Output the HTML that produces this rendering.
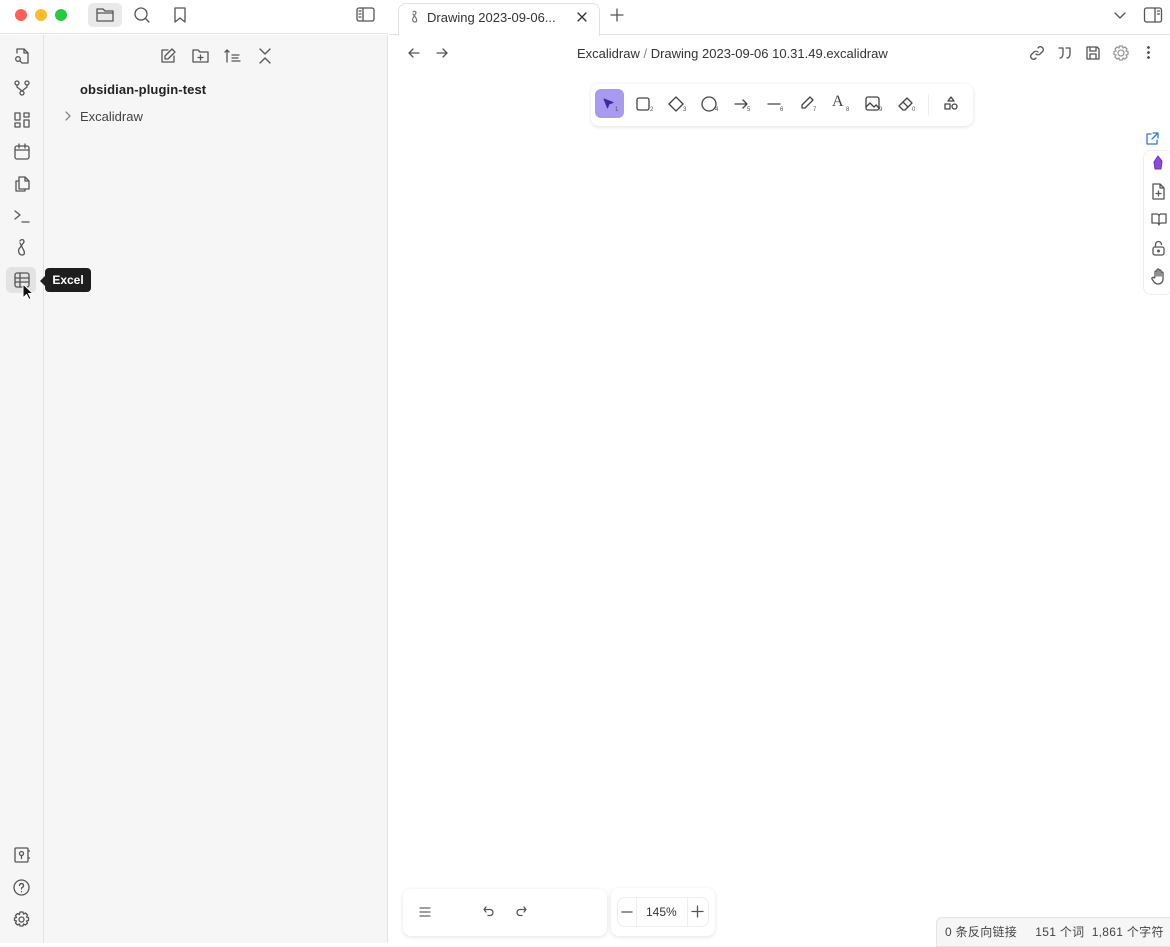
<!DOCTYPE html>
<html><head><meta charset="utf-8"><style>
*{box-sizing:border-box;margin:0;padding:0}
body{width:1170px;height:943px;overflow:hidden;background:#fff;font-family:"Liberation Sans","Noto Sans CJK SC",sans-serif;position:relative;color:#222}
.abs{position:absolute}
svg{position:absolute;fill:none;stroke:#555;stroke-width:1.3;stroke-linecap:round;stroke-linejoin:round}
.dot{position:absolute;width:12px;height:12px;border-radius:50%;top:9px}
.tb svg{stroke:#444}
.sub{position:absolute;font-size:6px;color:#555}
</style></head><body>
<div class="abs" style="left:0;top:0;width:388px;height:34px;background:#fff;border-bottom:1px solid #e3e3e3"></div>
<div class="dot" style="left:15px;background:#fe5f57"></div>
<div class="dot" style="left:35px;background:#febc2e"></div>
<div class="dot" style="left:55px;background:#28c840"></div>
<div class="abs" style="left:88px;top:3px;width:34px;height:24px;background:#e9e9e9;border-radius:5px"></div>
<svg style="left:95px;top:6px" width="20" height="18" viewBox="0 0 20 18"><path d="M2 3h6l2 2h8v10H2z M2 7h16"/></svg>
<svg style="left:133px;top:6px" width="18" height="18" viewBox="0 0 18 18"><circle cx="8" cy="8" r="6"/><path d="M12.5 12.5l3.5 3.5"/></svg>
<svg style="left:172px;top:6px" width="16" height="18" viewBox="0 0 16 18"><path d="M3 2h10v14l-5-4-5 4z"/></svg>
<svg style="left:356px;top:7px" width="20" height="16" viewBox="0 0 20 16"><rect x="1" y="1" width="17" height="13" rx="2"/><path d="M7 1v13M3 4h2M3 7h2M3 10h2"/></svg>
<div class="abs" style="left:0;top:35px;width:44px;height:908px;background:#f6f6f6;border-right:1px solid #e3e3e3"></div>
<div class="abs" style="left:44px;top:35px;width:344px;height:908px;background:#f6f6f6;border-right:1px solid #e3e3e3"></div>
<svg style="left:13px;top:47px" width="18" height="18" viewBox="0 0 18 18"><path d="M4 6V2h7l4 4v10H9"/><path d="M11 2v4h4"/><circle cx="5" cy="12" r="2.3"/><path d="M6.8 13.8L8.5 15.5"/></svg>
<svg style="left:13px;top:79px" width="18" height="18" viewBox="0 0 18 18"><circle cx="4" cy="4" r="2"/><circle cx="14" cy="4" r="2"/><circle cx="9" cy="14" r="2"/><path d="M4 6v2l5 4M14 6v2l-5 4"/></svg>
<svg style="left:13px;top:111px" width="18" height="18" viewBox="0 0 18 18"><rect x="2" y="2" width="5" height="7"/><rect x="11" y="2" width="5" height="4"/><rect x="2" y="12" width="5" height="4"/><rect x="11" y="9" width="5" height="7"/></svg>
<svg style="left:13px;top:143px" width="18" height="18" viewBox="0 0 18 18"><rect x="2" y="3" width="14" height="13" rx="2"/><path d="M2 7h14M6 1v4M12 1v4"/></svg>
<svg style="left:13px;top:175px" width="18" height="18" viewBox="0 0 18 18"><path d="M6 2h6l4 4v8H6z M12 2v4h4 M6 6H3v10h9v-2"/></svg>
<svg style="left:13px;top:207px" width="18" height="18" viewBox="0 0 18 18"><path d="M2 4l5 4-5 4M9 15h7"/></svg>
<svg style="left:15px;top:238px" width="14" height="20" viewBox="0 0 14 20"><path d="M5 3c1-2 4-2 4 1l-5 7c-1 2 0 6 3 6s3-3 1-6L5 5"/></svg>
<div class="abs" style="left:6px;top:267px;width:30px;height:26px;background:#e3e3e3;border-radius:5px"></div>
<svg style="left:13px;top:271px" width="18" height="18" viewBox="0 0 18 18"><rect x="2" y="2" width="14" height="14" rx="2"/><path d="M2 7h14M2 11h14M7 2v14"/></svg>
<svg style="left:22px;top:283px;fill:#111;stroke:#fff;stroke-width:1" width="12" height="18" viewBox="0 0 12 18"><path d="M1 1v14l3.5-3.5 2.5 5 2-1-2.5-5H11z"/></svg>
<div class="abs" style="left:45px;top:268px;width:46px;height:24px;background:#1e1e1e;border-radius:4px;color:#fff;font-size:12px;font-weight:bold;line-height:24px;text-align:center">Excel</div>
<div class="abs" style="left:40px;top:276px;width:0;height:0;border:5px solid transparent;border-right-color:#1e1e1e;border-left:0"></div>
<svg style="left:13px;top:846px" width="18" height="18" viewBox="0 0 18 18"><rect x="2" y="2" width="13" height="14" rx="1"/><circle cx="8.5" cy="7.5" r="2"/><path d="M8.5 9.5v3M15 5h1.5M15 12h1.5"/></svg>
<svg style="left:12px;top:878px" width="19" height="19" viewBox="0 0 19 19"><circle cx="9.5" cy="9.5" r="7.5"/><path d="M7.5 7.5a2 2 0 1 1 2.5 2c-.5.3-.5.8-.5 1.5M9.5 13.5v.2"/></svg>
<svg style="left:12px;top:910px" width="19" height="19" viewBox="0 0 19 19"><circle cx="9.5" cy="9.5" r="2.5"/><path d="M8 2h3l.5 2 2-1 2 2-1 2 2 .5v3l-2 .5 1 2-2 2-2-1-.5 2H8l-.5-2-2 1-2-2 1-2-2-.5V8l2-.5-1-2 2-2 2 1z"/></svg>
<svg style="left:159px;top:47px" width="18" height="18" viewBox="0 0 18 18"><path d="M15 9v6H3V3h6M13 2l3 3-7 7H6V9z"/></svg>
<svg style="left:191px;top:47px" width="19" height="18" viewBox="0 0 19 18"><path d="M2 3h5l2 2h8v10H2z M9.5 8v5M7 10.5h5"/></svg>
<svg style="left:223px;top:47px" width="19" height="18" viewBox="0 0 19 18"><path d="M4 15V3L2 5M4 3l2 2M9 8h7M9 11h6M9 14h8"/></svg>
<svg style="left:256px;top:47px" width="18" height="18" viewBox="0 0 18 18"><path d="M4 2l5 5 5-5M4 16l5-5 5 5"/></svg>
<div class="abs" style="left:80px;top:82px;font-size:13px;font-weight:bold;color:#222;letter-spacing:0.1px">obsidian-plugin-test</div>
<svg style="left:63px;top:111px;stroke:#888" width="10" height="10" viewBox="0 0 10 10"><path d="M3 1l4 4-4 4"/></svg>
<div class="abs" style="left:80px;top:109px;font-size:13px;color:#444">Excalidraw</div>
<div class="abs" style="left:389px;top:0;width:781px;height:35px;background:#fff;border-bottom:1px solid #e3e3e3"></div>
<div class="abs" style="left:398px;top:3px;width:202px;height:33px;background:#fff;border:1px solid #e0e0e0;border-bottom:none;border-radius:8px 8px 0 0"></div>
<svg style="left:409px;top:10px;stroke:#777;stroke-width:1.2" width="10" height="14" viewBox="0 0 10 14"><path d="M4 2c1-1 3-1 3 1l-3 5c-1 2 0 4 2 4s2-2 1-4L4 4"/></svg>
<div class="abs" style="left:427px;top:10px;font-size:13px;color:#333">Drawing 2023-09-06...</div>
<svg style="left:576px;top:11px;stroke:#333" width="12" height="12" viewBox="0 0 12 12"><path d="M2 2l8 8M10 2l-8 8"/></svg>
<svg style="left:610px;top:8px" width="14" height="14" viewBox="0 0 14 14"><path d="M7 1v12M1 7h12"/></svg>
<svg style="left:1113px;top:10px" width="14" height="12" viewBox="0 0 14 12"><path d="M2 3l5 5 5-5"/></svg>
<svg style="left:1143px;top:6px" width="20" height="18" viewBox="0 0 20 18"><rect x="1.5" y="2" width="17" height="14" rx="2"/><path d="M12 2v14M14.5 5h2M14.5 8h2"/></svg>
<svg style="left:407px;top:46px" width="14" height="14" viewBox="0 0 14 14"><path d="M12 7H2M6 3L2 7l4 4"/></svg>
<svg style="left:435px;top:46px" width="14" height="14" viewBox="0 0 14 14"><path d="M2 7h10M8 3l4 4-4 4"/></svg>
<div class="abs" style="left:577px;top:46px;font-size:13px;color:#333">Excalidraw <span style="color:#888">/</span> Drawing 2023-09-06 10.31.49.excalidraw</div>
<svg style="left:1029px;top:45px" width="16" height="16" viewBox="0 0 16 16"><path d="M7 9a3 3 0 0 0 4 0l3-3a3 3 0 0 0-4-4l-1 1M9 7a3 3 0 0 0-4 0l-3 3a3 3 0 0 0 4 4l1-1"/></svg>
<svg style="left:1057px;top:45px" width="16" height="16" viewBox="0 0 16 16"><path d="M2 3h4v5c0 3-1 5-3 5M9 3h4v5c0 3-1 5-3 5"/></svg>
<svg style="left:1085px;top:45px" width="16" height="16" viewBox="0 0 16 16"><path d="M2 2h10l2 2v10H2z M5 2v4h6V2M5 14v-5h6v5"/></svg>
<svg style="left:1112px;top:44px;stroke:#999" width="18" height="18" viewBox="0 0 18 18"><circle cx="9" cy="9" r="3"/><path d="M7.5 2h3l.5 2 2-1 2 2-1 2 2 .5v3l-2 .5 1 2-2 2-2-1-.5 2h-3l-.5-2-2 1-2-2 1-2-2-.5v-3l2-.5-1-2 2-2 2 1z"/></svg>
<div class="abs" style="left:1147px;top:45px;width:3px;height:14px;background:radial-gradient(circle,#555 1.3px,transparent 1.5px) 0 0/3px 5px"></div>
<div class="abs tb" style="left:591px;top:84px;width:382px;height:42px;background:#fff;border-radius:8px;box-shadow:0 1px 4px rgba(0,0,0,.12)">
<div class="abs" style="left:4px;top:5px;width:29px;height:29px;background:#a89af0;border-radius:6px"></div>
<svg style="left:11px;top:13px;fill:#3b2d9a;stroke:#3b2d9a;stroke-width:1" width="14" height="14" viewBox="0 0 14 14"><path d="M2 2l9 3.5-4 1.5-1.5 4z"/></svg><span class="sub" style="left:24px;top:23px">1</span>
<svg style="left:44px;top:12px" width="16" height="16" viewBox="0 0 16 16"><rect x="2" y="2" width="12" height="12" rx="2"/></svg><span class="sub" style="left:59px;top:23px">2</span>
<svg style="left:76px;top:11px" width="18" height="18" viewBox="0 0 18 18"><path d="M9 2l7 7-7 7-7-7z"/></svg><span class="sub" style="left:92px;top:23px">3</span>
<svg style="left:109px;top:11px" width="18" height="18" viewBox="0 0 18 18"><circle cx="9" cy="9" r="7"/></svg><span class="sub" style="left:124px;top:23px">4</span>
<svg style="left:142px;top:12px" width="16" height="16" viewBox="0 0 16 16"><path d="M2 8h12M10 4l4 4-4 4"/></svg><span class="sub" style="left:156px;top:23px">5</span>
<svg style="left:175px;top:12px" width="16" height="16" viewBox="0 0 16 16"><path d="M2 8h12"/></svg><span class="sub" style="left:189px;top:23px">6</span>
<svg style="left:208px;top:11px" width="16" height="16" viewBox="0 0 16 16"><path d="M11 2l3 3-8 8H3v-3z"/></svg><span class="sub" style="left:222px;top:23px">7</span>
<div class="abs" style="left:241px;top:9px;font-size:16px;color:#444;font-family:'Liberation Serif',serif">A</div><span class="sub" style="left:255px;top:23px">8</span>
<svg style="left:273px;top:11px" width="17" height="17" viewBox="0 0 17 17"><rect x="2" y="2" width="13" height="13" rx="2"/><path d="M2 12l4-4 4 4 2-2 3 3"/></svg><span class="sub" style="left:288px;top:23px">9</span>
<svg style="left:306px;top:11px" width="17" height="17" viewBox="0 0 17 17"><path d="M6 15l-4-4 8-8 5 5-7 7zM6 7l5 5"/></svg><span class="sub" style="left:321px;top:23px">0</span>
<div class="abs" style="left:337px;top:10px;width:1px;height:22px;background:#eee"></div>
<svg style="left:352px;top:11px" width="16" height="16" viewBox="0 0 16 16"><path d="M8 2l3 4H5z"/><rect x="2" y="9" width="5" height="5"/><circle cx="11.5" cy="11.5" r="2.5"/></svg>
</div>
<svg style="left:1145px;top:131px;stroke:#2e7bd6" width="15" height="15" viewBox="0 0 15 15"><path d="M12 9v4H2V3h4M8 2h5v5M13 2L7 8"/></svg>
<div class="abs" style="left:1143px;top:150px;width:30px;height:145px;border:1px solid #eee;border-radius:8px;background:#fff"></div>
<svg style="left:1152px;top:155px;fill:#8a4bd8;stroke:#6b36b8;stroke-width:1" width="12" height="16" viewBox="0 0 12 16"><path d="M6 1l4 5-1 8H3L2 7z"/></svg>
<svg style="left:1151px;top:183px" width="15" height="17" viewBox="0 0 15 17"><path d="M2 1h7l4 4v11H2z M9 1v4h4 M7.5 8v5M5 10.5h5"/></svg>
<svg style="left:1151px;top:212px" width="16" height="15" viewBox="0 0 16 15"><path d="M1 2h5c1 0 2 1 2 2v9c0-1-1-2-2-2H1zM15 2h-5c-1 0-2 1-2 2v9c0-1 1-2 2-2h5z"/></svg>
<svg style="left:1151px;top:240px" width="15" height="17" viewBox="0 0 15 17"><rect x="2" y="7" width="11" height="8" rx="2"/><path d="M4.5 7V4.5a3 3 0 0 1 6 0"/><circle cx="7.5" cy="11" r=".8"/></svg>
<svg style="left:1151px;top:268px" width="15" height="17" viewBox="0 0 15 17"><path d="M4 9V4a1 1 0 0 1 2 0v4V2a1 1 0 0 1 2 0v6V3a1 1 0 0 1 2 0v5V5a1 1 0 0 1 2 0v6c0 3-2 5-5 5-2 0-3-1-4-2l-2-3a1 1 0 0 1 2-1z"/></svg>
<div class="abs" style="left:403px;top:889px;width:204px;height:47px;background:#fff;border-radius:8px;box-shadow:0 1px 4px rgba(0,0,0,.12)"></div>
<svg style="left:418px;top:905px;stroke:#666" width="14" height="14" viewBox="0 0 14 14"><path d="M2 3h10M2 7h10M2 11h10"/></svg>
<svg style="left:482px;top:904px" width="14" height="14" viewBox="0 0 14 14"><path d="M4 3L2 5.5 4 8M2 5.5h6a3 3 0 0 1 0 6H6"/></svg>
<svg style="left:514px;top:904px" width="14" height="14" viewBox="0 0 14 14"><path d="M10 3l2 2.5L10 8M12 5.5H6a3 3 0 0 0 0 6h2"/></svg>
<div class="abs" style="left:611px;top:888px;width:104px;height:48px;background:#fff;border-radius:8px;box-shadow:0 1px 4px rgba(0,0,0,.12)"></div>
<div class="abs" style="left:617px;top:897px;width:92px;height:30px;background:#fff;border:1px solid #eee;border-radius:8px"></div>
<div class="abs" style="left:636px;top:898px;width:1px;height:28px;background:#eee"></div>
<div class="abs" style="left:687px;top:898px;width:1px;height:28px;background:#eee"></div>
<svg style="left:621px;top:906px" width="12" height="12" viewBox="0 0 12 12"><path d="M1 6h10"/></svg>
<svg style="left:691px;top:905px" width="13" height="13" viewBox="0 0 13 13"><path d="M1 6.5h11M6.5 1v11"/></svg>
<div class="abs" style="left:646px;top:905px;font-size:12px;color:#333">145%</div>
<div class="abs" style="left:936px;top:917px;width:240px;height:30px;background:#f6f6f6;border:1px solid #e3e3e3;border-radius:6px 0 0 0"></div>
<div class="abs" style="left:945px;top:923px;font-size:12px;color:#444;white-space:pre;letter-spacing:0.3px">0 条反向链接     151 个词  1,861 个字符</div>
</body></html>
